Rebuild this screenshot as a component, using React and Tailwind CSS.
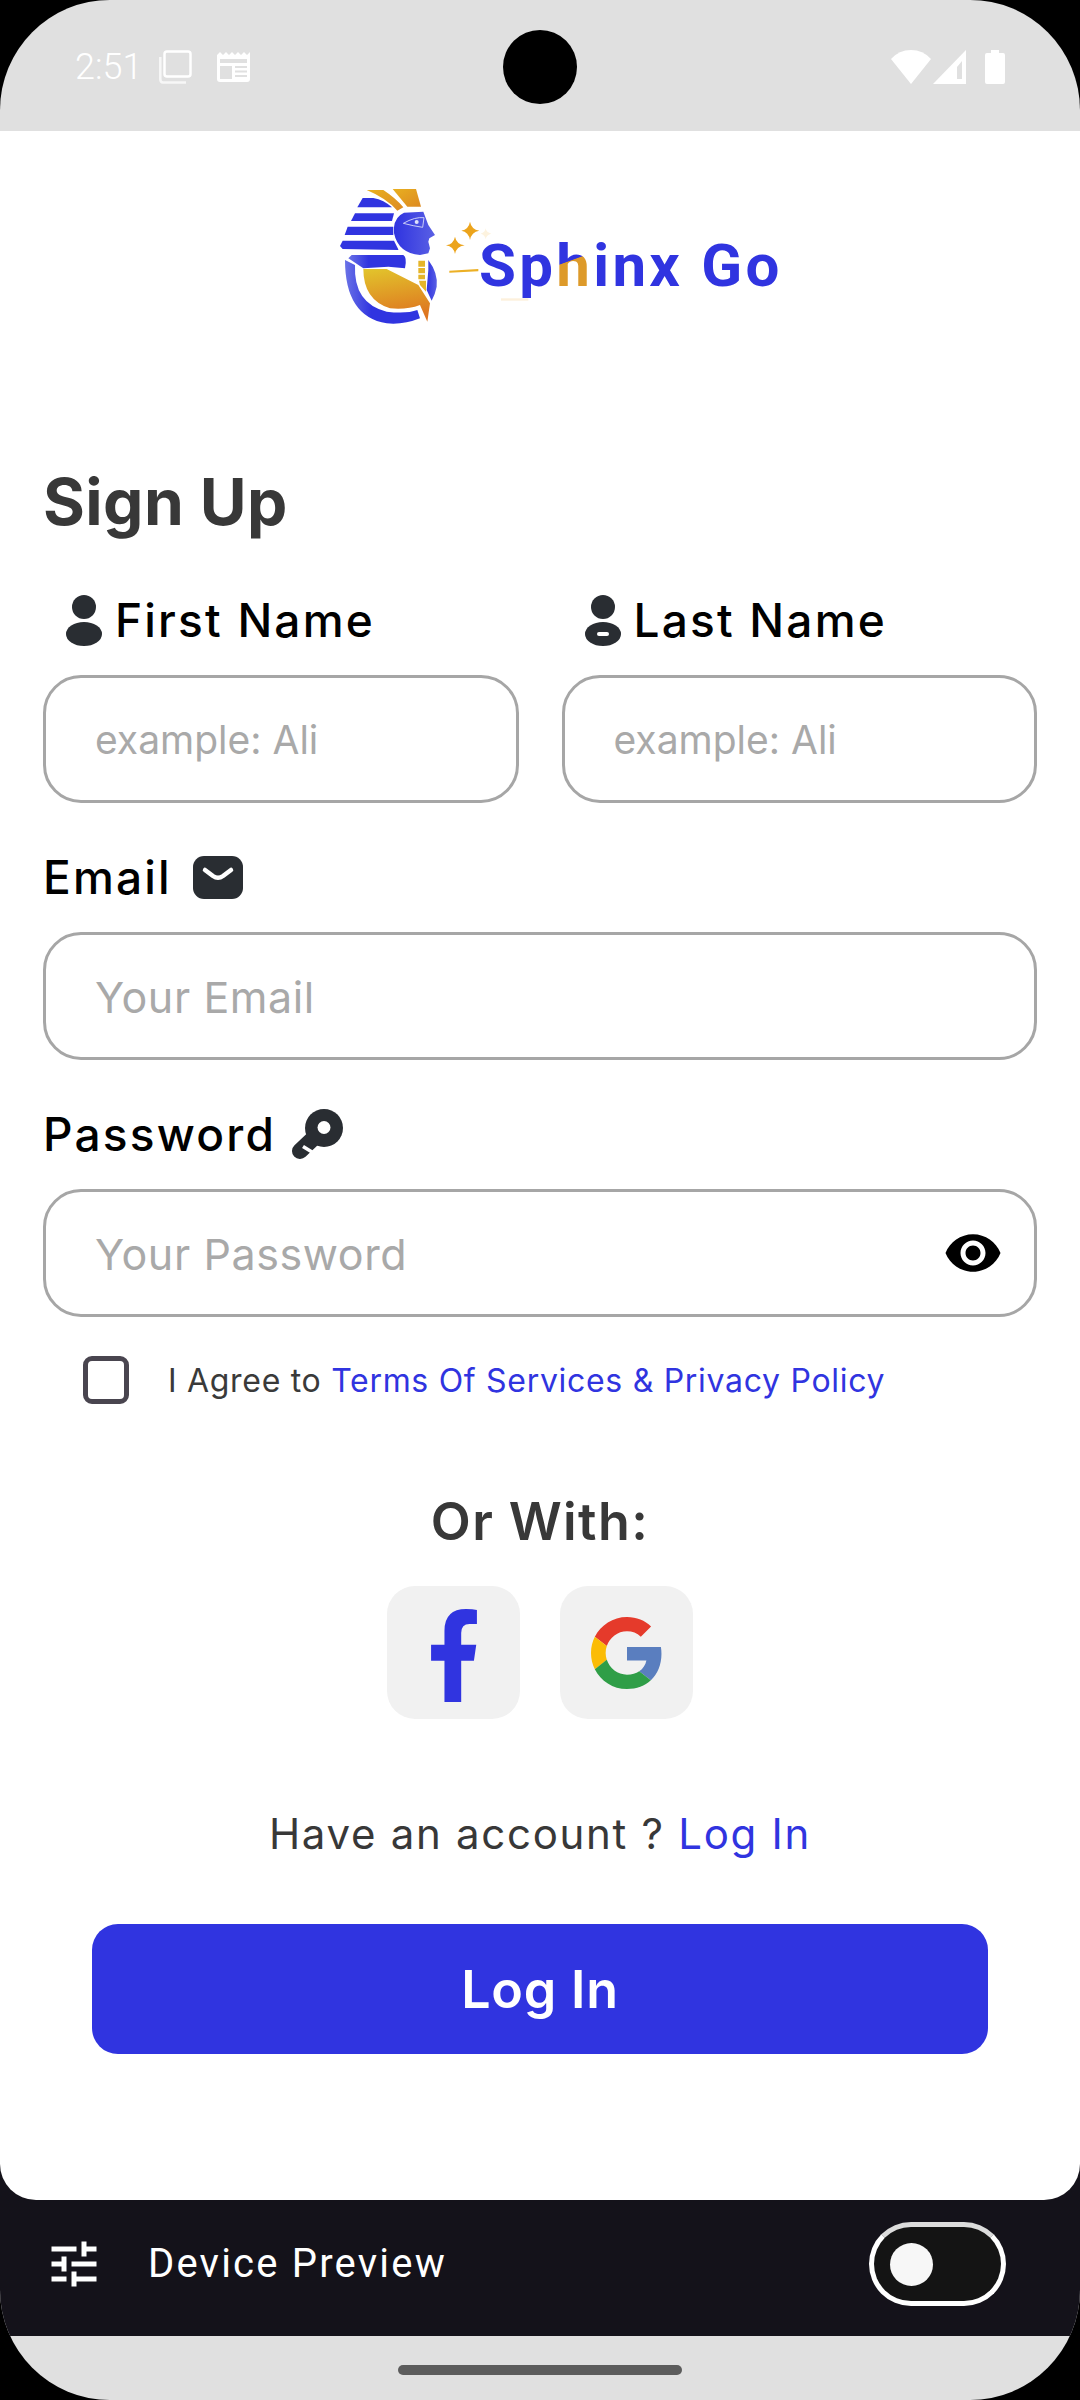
const sans = "font-['Inter','Noto_Sans',sans-serif]";

function Logo() {
  return (
    <div className="relative w-[470px] h-[170px]">
      <svg viewBox="0 0 1410 510" className="w-full h-full">
        <defs>
          <linearGradient id="gold" x1="0" y1="0" x2="0.2" y2="1">
            <stop offset="0" stopColor="#e2c52c" />
            <stop offset="1" stopColor="#de7620" />
          </linearGradient>
          <linearGradient id="gold2" x1="0" y1="0" x2="1" y2="1">
            <stop offset="0" stopColor="#e8b020" />
            <stop offset="1" stopColor="#dd8a22" />
          </linearGradient>
          <linearGradient id="blue" x1="0" y1="0" x2="1" y2="0">
            <stop offset="0" stopColor="#6a72e6" />
            <stop offset="0.35" stopColor="#3034e0" />
            <stop offset="1" stopColor="#3034e0" />
          </linearGradient>
          <linearGradient id="face" x1="0" y1="0" x2="1" y2="0">
            <stop offset="0" stopColor="#2f33e0" />
            <stop offset="1" stopColor="#5a60e4" />
          </linearGradient>
        </defs>
        <path d="M128 84 L160 84 Q192 90 216 112 L112 112 Z" fill="#3034e0" />
        <path d="M105 130 L222 130 L216 153 L93 153 Z" fill="#3034e0" />
        <path d="M83 170 L220 170 L220 195 L74 195 Z" fill="#3034e0" />
        <path d="M68 212 L222 212 L236 240 L68 237 L60 228 Z" fill="#3034e0" />
        <path d="M140 60 L190 60 Q228 85 250 112 L232 122 Q200 85 140 60 Z" fill="url(#gold2)" />
        <path d="M218 57 L288 57 L303 110 L262 110 Z" fill="url(#gold2)" />
        <path d="M222 172 Q225 140 252 128 L310 125 L325 165 L345 195 L328 205 L325 215 L330 235 L325 250 L300 255 Q235 250 222 190 Z" fill="url(#face)" />
        <path d="M250 160 Q285 140 312 143 L308 172 Q280 168 250 160 Z" fill="none" stroke="#c9ccf7" strokeWidth="3" />
        <circle cx="290" cy="156" r="6" fill="#dfe1fb" />
        <path d="M95 255 L250 255 Q262 262 255 295 L205 290 L130 295 L85 265 Z" fill="url(#blue)" />
        <path d="M75 270 L105 285 Q100 400 200 425 Q260 432 292 420 L300 445 Q250 465 200 460 Q75 440 75 270 Z" fill="url(#blue)" />
        <path d="M325 270 Q355 310 350 350 Q345 375 335 392 L320 360 L325 300 Z" fill="url(#face)" />
        <path d="M295 272 H315 V290 H295 Z M295 294 H315 V310 H295 Z M295 314 H315 V328 H295 Z M297 332 H318 V365 L300 345 Z" fill="#e5b52a" />
        <path d="M130 297 L200 297 L295 345 L330 400 L322 455 L300 405 Q260 420 210 415 Q130 390 130 297 Z" fill="url(#gold)" />
        <path d="M450 155 Q454 178 478 182 Q454 186 450 210 Q446 186 424 182 Q446 178 450 155 Z" fill="#eca41c" />
        <path d="M405 200 Q409 222 434 226 Q409 230 405 252 Q401 230 378 226 Q401 222 405 200 Z" fill="#eca41c" />
        <path d="M497 175 Q499 188 514 191 Q499 194 497 208 Q495 194 482 191 Q495 188 497 175 Z" fill="#fdf3df" />
        <path d="M388 302 L475 297 L475 304 L388 308 Z" fill="#ecb025" />
        <rect x="543" y="385" width="82" height="7" fill="#fdf0dc" />
      </svg>
      <div className="absolute left-[159px] top-[61px] font-['Roboto',sans-serif] font-bold text-[60px] leading-[70px] tracking-[3.3px] text-[#3034e0] whitespace-nowrap">
        Sp<span className="bg-[linear-gradient(160deg,#3034e0_42%,#dd9a2a_43%,#dd9a2a_100%)] bg-clip-text text-transparent">h</span>inx Go
      </div>
    </div>
  );
}

function PersonIcon({ dash }) {
  return (
    <svg viewBox="0 0 36 51" className="w-[36px] h-[51px] shrink-0">
      <circle cx="18" cy="12" r="12" fill="#292d32" />
      <ellipse cx="18" cy="39" rx="18" ry="12" fill="#292d32" />
      {dash && <rect x="12" y="37" width="12" height="4" rx="2" fill="#fff" />}
    </svg>
  );
}

function Field({ text, right, size = "text-[43px] tracking-[0.6px]" }) {
  return (
    <div className="h-[128px] rounded-[38px] border-[3px] border-[#a6a6a6] bg-white flex items-center justify-between pl-[49px] pr-[31px]">
      <span className={`${size} leading-[60px] pt-[1px] text-[#a9a9a9] whitespace-nowrap`}>{text}</span>
      {right}
    </div>
  );
}

function Label({ children }) {
  return (
    <div className="h-[60px] mb-[25px] flex items-center text-[46px] font-medium tracking-[2.2px] text-black whitespace-nowrap">
      {children}
    </div>
  );
}

export default function App() {
  return (
    <div className="w-[1080px] h-[2400px] bg-black">
      <div className={`h-full rounded-[110px] overflow-hidden bg-[#e0e0e0] flex flex-col ${sans}`}>
        {/* status bar */}
        <div className="h-[131px] shrink-0 flex items-center px-[75px] pt-[2px] text-white">
          <div className="flex-1 flex items-center">
            <span className="font-['Roboto',sans-serif] text-[36px] leading-[40px] font-light w-[84px]">2:51</span>
            <svg viewBox="0 0 33 34" className="w-[33px] h-[34px]" fill="none" stroke="#fff" strokeWidth="2.5">
              <rect x="5.5" y="1.5" width="26" height="25" rx="2.5" />
              <path d="M1.3 7 V29 Q1.3 32.5 4 32.5 H27" strokeOpacity="0.75" />
            </svg>
            <svg viewBox="0 0 33 30" className="w-[33px] h-[30px] ml-[25px]">
              <path d="M0 3 L3 0 L6 3 L9 0 L12 3 L15 0 L18 3 L21 0 L24 3 L27 0 L30 3 L33 0 V27 Q33 30 30 30 H3 Q0 30 0 27 Z" fill="#fff" />
              <path d="M3 7 H30 V11 H3 Z M3 14 H15 V27 H3 Z M18 14 H30 V16 H18 Z M18 18.5 H30 V20.5 H18 Z M18 23 H30 V25 H18 Z" fill="#e0e0e0" />
            </svg>
          </div>
          <div className="w-[74px] h-[74px] rounded-full bg-black shrink-0" />
          <div className="flex-1 flex items-center justify-end">
            <svg viewBox="0 0 40 34" className="w-[40px] h-[34px]">
              <path d="M20 34 L0 9 Q8 0 20 0 Q32 0 40 9 Z" fill="#fff" />
            </svg>
            <svg viewBox="0 0 33 34" className="w-[33px] h-[34px] ml-[2px]">
              <path d="M0 34 L33 0 V34 Z" fill="#fff" />
              <path d="M24 17 L29 11 V29 H24 Z" fill="#e0e0e0" />
            </svg>
            <svg viewBox="0 0 20 34" className="w-[20px] h-[34px] ml-[19px]">
              <path d="M6 0 H14 V3 H18 Q20 3 20 5 V32 Q20 34 18 34 H2 Q0 34 0 32 V5 Q0 3 2 3 H6 Z" fill="#fff" />
            </svg>
          </div>
        </div>

        {/* dark wrapper */}
        <div className="h-[2205px] shrink-0 bg-[#14121a] flex flex-col">
          <main className="h-[2069px] shrink-0 bg-white rounded-b-[36px] px-[43px] overflow-hidden">
            <div className="mt-[39px] flex justify-center pl-[30px]">
              <Logo />
            </div>

            <h1 className="mt-[122px] h-[80px] leading-[80px] text-[64px] font-bold text-[#383838] tracking-[0.4px]">Sign Up</h1>

            <div className="mt-[48px] grid grid-cols-2 gap-x-[43px]">
              <div>
                <Label>
                  <span className="ml-[23px] mr-[13px] flex"><PersonIcon /></span>First Name
                </Label>
                <Field text="example: Ali" size="text-[39px]" />
              </div>
              <div>
                <Label>
                  <span className="ml-[23px] mr-[13px] flex"><PersonIcon dash /></span>Last Name
                </Label>
                <Field text="example: Ali" size="text-[39px]" />
              </div>
            </div>

            <div className="mt-[44px]">
              <Label>
                Email
                <svg viewBox="0 0 50 43" className="w-[50px] h-[43px] ml-[21px]">
                  <rect width="50" height="43" rx="11" fill="#292d32" />
                  <path d="M12 14 L20 20 Q25 23.5 30 20 L38 14" fill="none" stroke="#fff" strokeWidth="4.5" strokeLinecap="round" />
                </svg>
              </Label>
              <Field text="Your Email" />
            </div>

            <div className="mt-[44px]">
              <Label>
                Password
                <svg viewBox="0 0 51 50" className="w-[51px] h-[50px] ml-[16px]">
                  <circle cx="32" cy="19" r="19" fill="#292d32" />
                  <path d="M26 25 L8 42" stroke="#292d32" strokeWidth="16" strokeLinecap="round" />
                  <path d="M11 37.5 L20 43" stroke="#fff" strokeWidth="3.5" />
                  <circle cx="32" cy="18.5" r="6.5" fill="#fff" />
                </svg>
              </Label>
              <Field
                text="Your Password"
                right={
                  <svg viewBox="0 0 24 24" className="w-[60px] h-[60px]" fill="#000">
                    <path d="M12 4.5C7 4.5 2.73 7.61 1 12c1.73 4.39 6 7.5 11 7.5s9.27-3.11 11-7.5c-1.73-4.39-6-7.5-11-7.5zM12 17c-2.76 0-5-2.24-5-5s2.24-5 5-5 5 2.24 5 5-2.24 5-5 5zm0-8c-1.66 0-3 1.34-3 3s1.34 3 3 3 3-1.34 3-3-1.34-3-3-3z" />
                  </svg>
                }
              />
            </div>

            <div className="mt-[39px] pl-[40px] flex items-center gap-[39px] h-[48px]">
              <div className="w-[46px] h-[48px] rounded-[9px] border-[5px] border-[#49454f] shrink-0" />
              <p className="text-[32px] pt-[2px] tracking-[0.7px] text-[#3a3a3a] whitespace-nowrap">
                I Agree to <span className="text-[#3034e0]">Terms Of Services &amp; Privacy Policy</span>
              </p>
            </div>

            <p className="mt-[88px] h-[60px] leading-[60px] text-center text-[52px] tracking-[1.4px] font-semibold text-[#383838]">Or With:</p>

            <div className="mt-[34px] flex justify-center gap-[40px]">
              <div className="w-[133px] h-[133px] rounded-[28px] bg-[#f1f1f1] flex items-center justify-center">
                <svg viewBox="210 150 137 278" className="w-[46px] h-[93px] mt-[5px]">
                  <path d="M250 428 V305 H210 V257 H250 V215 Q250 150 315 150 Q335 150 347 153 V195 H325 Q300 195 300 222 V257 H345 L338 305 H300 V428 Z" fill="#3034e0" />
                </svg>
              </div>
              <div className="w-[133px] h-[133px] rounded-[28px] bg-[#f1f1f1] flex items-center justify-center">
                <svg viewBox="0 0 48 48" className="w-[72px] h-[72px]">
                  <path fill="#e53a2b" d="M24 9.5c3.54 0 6.71 1.22 9.21 3.6l6.85-6.85C35.9 2.38 30.47 0 24 0 14.62 0 6.51 5.38 2.56 13.22l7.98 6.19C12.43 13.72 17.74 9.5 24 9.5z" />
                  <path fill="#5a7ebf" d="M46.98 24.55c0-1.57-.15-3.09-.38-4.55H24v9.02h12.94c-.58 2.96-2.26 5.48-4.78 7.18l7.73 6c4.51-4.18 7.09-10.36 7.09-17.65z" />
                  <path fill="#fbbc05" d="M10.53 28.59c-.48-1.45-.76-2.99-.76-4.59s.27-3.14.76-4.59l-7.98-6.19C.92 16.46 0 20.12 0 24c0 3.88.92 7.54 2.56 10.78l7.97-6.19z" />
                  <path fill="#2f9e47" d="M24 48c6.48 0 11.93-2.13 15.89-5.81l-7.73-6c-2.15 1.45-4.92 2.3-8.16 2.3-6.26 0-11.57-4.22-13.47-9.91l-7.98 6.19C6.51 42.62 14.62 48 24 48z" />
                </svg>
              </div>
            </div>

            <p className="mt-[85px] h-[60px] leading-[60px] text-center text-[42px] tracking-[1.7px] text-[#383838]">
              Have an account ? <span className="text-[#3034e0]">Log In</span>
            </p>

            <div className="mt-[60px] mx-[49px] h-[130px] pt-[2px] rounded-[26px] bg-[#3034e0] flex items-center justify-center text-[52px] tracking-[0.8px] font-semibold text-white">
              Log In
            </div>
          </main>

          <div className="flex-1 flex items-center justify-between pl-[44px] pr-[74px] pb-[8px] text-white">
            <div className="flex items-center">
              <svg viewBox="0 0 24 24" className="w-[60px] h-[60px]" fill="#fff">
                <path d="M3 17v2h6v-2H3zM3 5v2h10V5H3zm10 16v-2h8v-2h-8v-2h-2v6h2zM7 9v2H3v2h4v2h2V9H7zm14 4v-2H11v2h10zm-6-4h2V7h4V5h-4V3h-2v6z" />
              </svg>
              <span className="ml-[44px] font-['Roboto',sans-serif] text-[40px] tracking-[2.2px]">Device Preview</span>
            </div>
            <div className="w-[137px] h-[84px] rounded-full border-[5px] border-white border-t-[#dcdcdc] bg-[#141414] flex items-center pl-[16px]">
              <div className="w-[43px] h-[43px] rounded-full bg-[#f7f7f7]" />
            </div>
          </div>
        </div>

        {/* gesture bar */}
        <div className="flex-1 flex items-center justify-center pt-[4px]">
          <div className="w-[284px] h-[10px] rounded-full bg-[#5c5c5c]" />
        </div>
      </div>
    </div>
  );
}
